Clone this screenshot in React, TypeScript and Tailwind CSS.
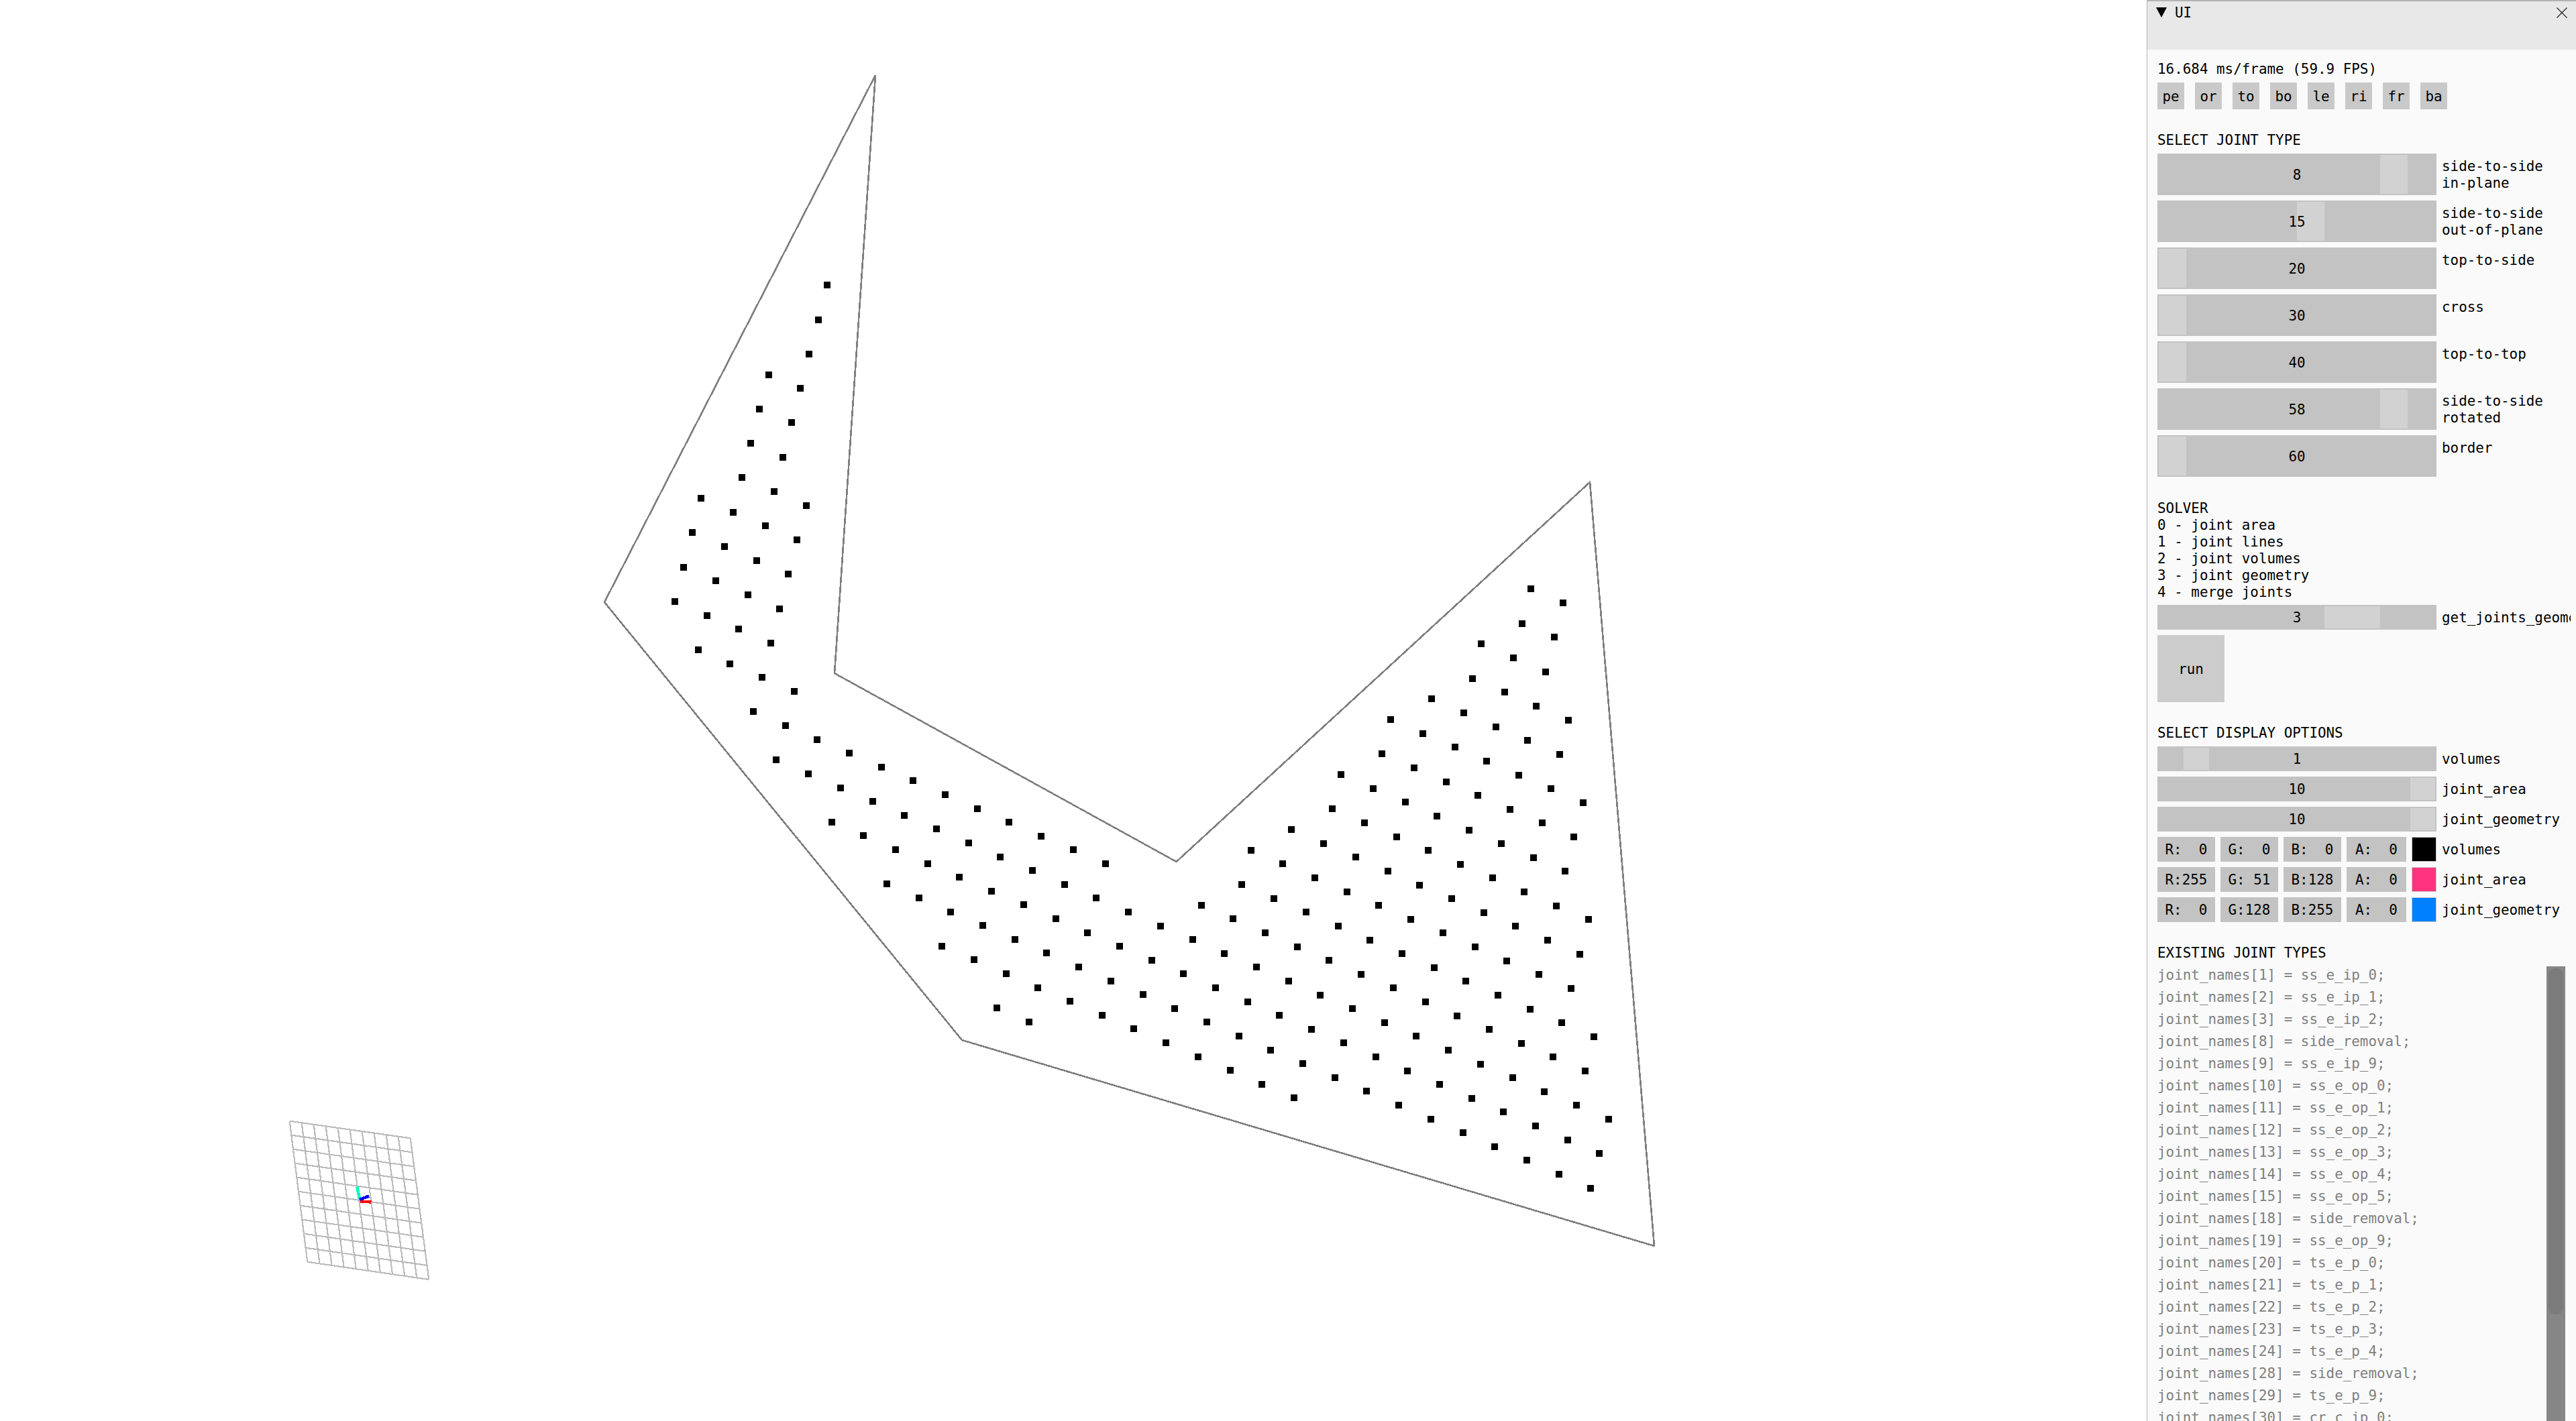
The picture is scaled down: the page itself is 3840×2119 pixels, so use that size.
import { Fragment } from "react";

// lattice columns of the point cloud: [column, first row, last row]
const columns: [number, number, number][] = [
  [0, -3, 0], [1, -7, 1], [2, -10, 1], [3, -4, 2], [4, 1, 3], [5, 2, 3], [6, 2, 4], [7, 2, 4],
  [8, 2, 5], [9, 2, 5], [10, 2, 6], [11, 2, 6], [12, 2, 7], [13, 2, 7], [14, 2, 6], [15, 3, 6],
  [16, 3, 6], [17, 2, 6], [18, 0, 6], [19, -1, 6], [20, -3, 6], [21, -5, 6], [22, -6, 5], [23, -8, 5],
  [24, -10, 5], [25, -10, 5], [26, -7, 5], [27, -5, 5], [28, -2, 5], [29, 1, 5], [30, 3, 5],
];

const dots: { x: number; y: number }[] = [];
for (const [i, from, to] of columns) {
  for (let j = from; j <= to; j++) {
    dots.push({
      x: Math.round(1006 + i * 47.7 - j * 13.13 - 5),
      y: Math.round(897 + i * 20.6 + j * 51.3 - 5),
    });
  }
}

const outline = "1305,112 901,898 1434,1551 2466,1858 2370,719 1753.6,1285 1244,1004";

const lerp = (a: number[], b: number[], t: number) => [a[0] + (b[0] - a[0]) * t, a[1] + (b[1] - a[1]) * t];
const gridTL = [431.7, 1671.7];
const gridTR = [611.7, 1697.3];
const gridBL = [458.3, 1881.7];
const gridBR = [639.3, 1908];
const gridSteps = [0, 1, 2, 3, 4, 5, 6, 7, 8, 9, 10];

const buttons = ["pe", "or", "to", "bo", "le", "ri", "fr", "ba"];

const jointSliders = [
  { value: "8", left: 332, label: ["side-to-side", "in-plane"] },
  { value: "15", left: 208, label: ["side-to-side", "out-of-plane"] },
  { value: "20", left: 2, label: ["top-to-side"] },
  { value: "30", left: 2, label: ["cross"] },
  { value: "40", left: 2, label: ["top-to-top"] },
  { value: "58", left: 332, label: ["side-to-side", "rotated"] },
  { value: "60", left: 2, label: ["border"] },
];

const colours = [
  { parts: ["R:  0", "G:  0", "B:  0", "A:  0"], swatch: "bg-[#000000]", label: "volumes" },
  { parts: ["R:255", "G: 51", "B:128", "A:  0"], swatch: "bg-[#ff3380]", label: "joint_area" },
  { parts: ["R:  0", "G:128", "B:255", "A:  0"], swatch: "bg-[#0080ff]", label: "joint_geometry" },
];

const jointNames: [number, string][] = [
  [1, "ss_e_ip_0"], [2, "ss_e_ip_1"], [3, "ss_e_ip_2"], [8, "side_removal"], [9, "ss_e_ip_9"],
  [10, "ss_e_op_0"], [11, "ss_e_op_1"], [12, "ss_e_op_2"], [13, "ss_e_op_3"], [14, "ss_e_op_4"],
  [15, "ss_e_op_5"], [18, "side_removal"], [19, "ss_e_op_9"], [20, "ts_e_p_0"], [21, "ts_e_p_1"],
  [22, "ts_e_p_2"], [23, "ts_e_p_3"], [24, "ts_e_p_4"], [28, "side_removal"], [29, "ts_e_p_9"],
  [30, "cr_c_ip_0"],
];

function Viewport() {
  return (
    <svg className="block h-full w-full" viewBox="0 0 3200 2119">
      <polygon points={outline} fill="none" stroke="#7f7f7f" strokeWidth={2.6} shapeRendering="crispEdges" />
      {dots.map((d) => (
        <rect key={`${d.x}-${d.y}`} x={d.x} y={d.y} width={10} height={10} fill="#000" shapeRendering="crispEdges" />
      ))}
      <g stroke="#bcbcbc" strokeWidth={2.2} shapeRendering="crispEdges">
        {gridSteps.map((n) => {
          const a = lerp(gridTL, gridBL, n / 10);
          const b = lerp(gridTR, gridBR, n / 10);
          const c = lerp(gridTL, gridTR, n / 10);
          const d = lerp(gridBL, gridBR, n / 10);
          return (
            <Fragment key={n}>
              <line x1={a[0]} y1={a[1]} x2={b[0]} y2={b[1]} />
              <line x1={c[0]} y1={c[1]} x2={d[0]} y2={d[1]} />
            </Fragment>
          );
        })}
      </g>
      <g strokeWidth={4.5} shapeRendering="crispEdges">
        <line x1={536} y1={1788} x2={532.3} y2={1769.5} stroke="#00ffb4" />
        <line x1={537.5} y1={1791.5} x2={553.5} y2={1792.5} stroke="#ff0000" />
        <line x1={536} y1={1789} x2={550} y2={1783.5} stroke="#0000ff" />
      </g>
    </svg>
  );
}

function Slider({ value, left, grab, tall }: { value: string; left: number; grab: number; tall?: boolean }) {
  return (
    <div
      className={`relative flex w-[416px] shrink-0 items-center justify-center bg-[#c3c3c3] pt-[2px] ${tall ? "h-[62px]" : "h-[37px]"}`}
    >
      <div className="absolute top-[2px] bottom-[2px] bg-[#d2d2d2]" style={{ left, width: grab }} />
      <span className="relative">{value}</span>
    </div>
  );
}

function Label({ lines }: { lines: string[] }) {
  return (
    <div className="w-[192px] overflow-hidden pt-[6px] whitespace-nowrap">
      {lines.map((line) => (
        <div key={line} className="h-[25px]">
          {line}
        </div>
      ))}
    </div>
  );
}

function Line({ children }: { children: React.ReactNode }) {
  return <div className="h-[25px] shrink-0">{children}</div>;
}

function Panel() {
  return (
    <div className="flex h-full w-[640px] shrink-0 flex-col border-l border-[#b4b4b4] bg-[#fafafa] font-['DejaVu_Sans_Mono',monospace] text-[20.9px] leading-[27px] text-black">
      <div className="flex h-[74px] shrink-0 items-start justify-between border-t-2 border-[#b4b4b4] bg-[#e8e8e8] pt-[4px] pr-[13px] pl-[13px]">
        <div className="flex items-start gap-[12px]">
          <svg className="mt-[5px] h-[16px] w-[16px]" viewBox="0 0 16 16">
            <polygon points="0,0 16,0 8,15" fill="#000" />
          </svg>
          <span>UI</span>
        </div>
        <svg className="mt-[5px] h-[16px] w-[16px]" viewBox="0 0 16 16">
          <path d="M0.5 0.5 L15.5 15.5 M15.5 0.5 L0.5 15.5" stroke="#222" strokeWidth={1.2} fill="none" />
        </svg>
      </div>

      <div className="flex min-h-0 flex-1 flex-col overflow-hidden pr-[8px] pl-[15px]">
        <div className="mt-[16px]">
          <Line>16.684 ms/frame (59.9 FPS)</Line>
        </div>
        <div className="mt-[8px] flex gap-[16px]">
          {buttons.map((b) => (
            <div key={b} className="flex h-[40px] w-[40px] items-center justify-center bg-[#c9c9c9] pt-[2px]">
              {b}
            </div>
          ))}
        </div>

        <div className="mt-[33px]">
          <Line>SELECT JOINT TYPE</Line>
        </div>
        <div className="mt-[8px] flex flex-col gap-[8px]">
          {jointSliders.map((s) => (
            <div key={s.value} className="flex gap-[8px]">
              <Slider value={s.value} left={s.left} grab={41} tall />
              <Label lines={s.label} />
            </div>
          ))}
        </div>

        <div className="mt-[34px]">
          <Line>SOLVER</Line>
          <Line>0 - joint area</Line>
          <Line>1 - joint lines</Line>
          <Line>2 - joint volumes</Line>
          <Line>3 - joint geometry</Line>
          <Line>4 - merge joints</Line>
        </div>
        <div className="mt-[7px] flex gap-[8px]">
          <Slider value="3" left={249} grab={83} />
          <Label lines={["get_joints_geometry"]} />
        </div>
        <div className="mt-[8px] flex h-[100px] w-[100px] shrink-0 items-center justify-center bg-[#cccccc] pt-[2px]">
          run
        </div>

        <div className="mt-[33px]">
          <Line>SELECT DISPLAY OPTIONS</Line>
        </div>
        <div className="mt-[8px] flex flex-col gap-[8px]">
          <div className="flex gap-[8px]">
            <Slider value="1" left={39} grab={38} />
            <Label lines={["volumes"]} />
          </div>
          <div className="flex gap-[8px]">
            <Slider value="10" left={377} grab={37} />
            <Label lines={["joint_area"]} />
          </div>
          <div className="flex gap-[8px]">
            <Slider value="10" left={377} grab={37} />
            <Label lines={["joint_geometry"]} />
          </div>
          {colours.map((c) => (
            <div key={c.label} className="flex gap-[8px]">
              <div className="flex h-[37px] w-[416px] shrink-0 gap-[8px]">
                {c.parts.map((p, n) => (
                  <div
                    key={n}
                    className={`flex items-center justify-center bg-[#c3c3c3] pt-[2px] whitespace-pre ${n === 3 ? "w-[89px]" : "w-[86px]"}`}
                  >
                    {p}
                  </div>
                ))}
                <div className={`h-[37px] w-[37px] border border-[#c8c8c8] ${c.swatch}`} />
              </div>
              <Label lines={[c.label]} />
            </div>
          ))}
        </div>

        <div className="mt-[33px]">
          <Line>EXISTING JOINT TYPES</Line>
        </div>
        <div className="mt-[8px] flex min-h-0 w-[608px] flex-1 overflow-hidden">
          <div className="flex min-w-0 flex-1 flex-col gap-[8px] text-[#808080]">
            {jointNames.map(([n, name]) => (
              <Line key={n}>
                joint_names[{n}] = {name};
              </Line>
            ))}
          </div>
          <div className="w-[28px] shrink-0 self-stretch bg-[#868686] p-[3px]">
            <div className="h-[516px] rounded-[10px] bg-[#7b7b7b]" />
          </div>
        </div>
      </div>
    </div>
  );
}

export default function App() {
  return (
    <div className="flex h-[2119px] w-[3840px] overflow-hidden bg-white">
      <div className="min-w-0 flex-1">
        <Viewport />
      </div>
      <Panel />
    </div>
  );
}
